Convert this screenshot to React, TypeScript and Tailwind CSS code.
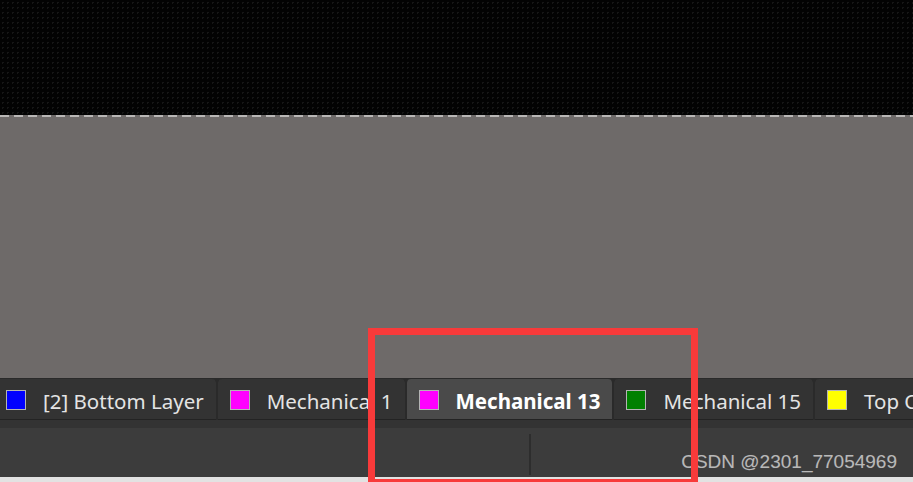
import React from 'react';

const layers = [
  { id: 1, name: '[2] Bottom Layer', color: 'bg-[#0000ff]', active: false },
  { id: 2, name: 'Mechanical 1', color: 'bg-[#ff00ff]', active: false },
  { id: 3, name: 'Mechanical 13', color: 'bg-[#ff00ff]', active: true },
  { id: 4, name: 'Mechanical 15', color: 'bg-[#008000]', active: false },
  { id: 5, name: 'Top Overlay', color: 'bg-[#ffff00]', active: false },
];

export default function App() {
  return (
    <div className="relative w-[913px] h-[482px] overflow-hidden bg-[#6e6a69] font-['Noto_Sans',sans-serif]">
      {/* board area */}
      <div className="h-[115px] bg-[#030303] bg-[radial-gradient(#161616_1px,transparent_1px)] bg-[size:5px_5px]" />
      <div className="h-[2px] bg-[repeating-linear-gradient(90deg,#b9b7b6_0px,#b9b7b6_9px,#6e6a69_9px,#6e6a69_14px)]" />
      <div className="h-[261px] bg-[#6e6a69]" />

      {/* layer tabs */}
      <div className="flex h-[42px] gap-[2px] bg-[#2a2a2a] pt-px -ml-[6px] whitespace-nowrap">
        {layers.map((layer) => (
          <div
            key={layer.id}
            className={
              'flex shrink-0 items-center gap-[17px] rounded-t-[4px] pl-3 pr-3 shadow-[inset_0_-1px_0_#232323] ' +
              (layer.active ? 'bg-[#4a4a4a] text-white font-bold' : 'bg-[#333333] text-[#e4e4e4]')
            }
          >
            <span className={'block w-5 h-5 border border-[#b4b4b4] ' + layer.color} />
            <span className="pt-[3px] text-[20.5px] leading-none">{layer.name}</span>
          </div>
        ))}
      </div>

      {/* status area */}
      <div className="h-2 bg-[#333333]" />
      <div className="flex h-[49px] bg-[#3c3c3c]">
        <div className="w-[529px] shrink-0" />
        <div className="mt-[6px] mb-[2px] w-[2px] bg-[#2d2d2d]" />
      </div>
      <div className="h-[5px] bg-[#e2e2e2]" />

      <span className="absolute right-[16px] top-[448px] text-[19px] text-[#b8b8b8] font-['Liberation_Sans',sans-serif] [text-shadow:0_0_1px_#555]">
        CSDN @2301_77054969
      </span>

      {/* highlight box */}
      <div className="absolute left-[368px] top-[328px] w-[330px] h-[158px] border-[7px] border-[#f83a3a]" />
    </div>
  );
}
